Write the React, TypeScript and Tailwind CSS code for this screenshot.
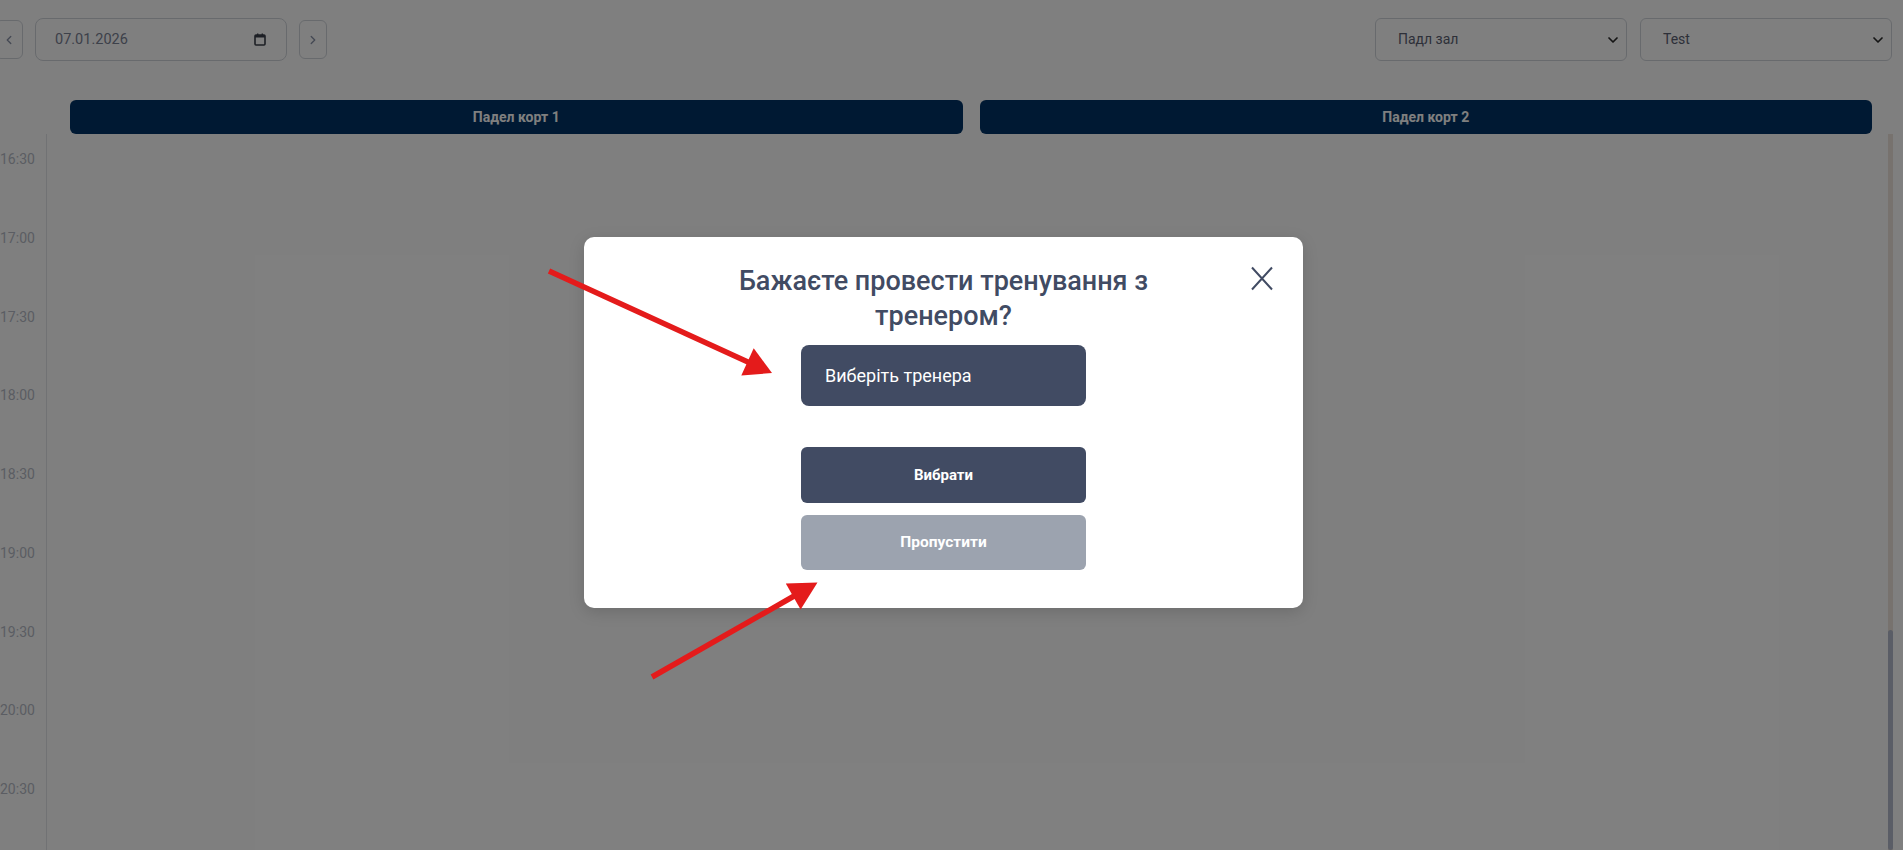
import { ChevronDown, ChevronLeft, ChevronRight } from 'lucide-react';

const times = ['16:30', '17:00', '17:30', '18:00', '18:30', '19:00', '19:30', '20:00', '20:30'];
const courts = ['Падел корт 1', 'Падел корт 2'];

function CalendarIcon() {
  return (
    <svg width="12" height="13" viewBox="0 0 12 13" fill="none">
      <rect x="1" y="2" width="10" height="10" rx="1" stroke="#3a3f4a" strokeWidth="1.6" />
      <rect x="1" y="2" width="10" height="2.5" fill="#3a3f4a" />
      <rect x="3" y="0.5" width="1.4" height="2.5" fill="#3a3f4a" />
      <rect x="7.6" y="0.5" width="1.4" height="2.5" fill="#3a3f4a" />
    </svg>
  );
}

function Select({ label }: { label: string }) {
  return (
    <div className="flex h-[43px] w-[252px] items-center justify-between rounded-md border border-[#d1d5db] bg-white pl-[22px] pr-[5px] text-[14px] text-[#5b6172]">
      <span>{label}</span>
      <ChevronDown size={16} strokeWidth={2.6} className="text-[#2b2b2b]" />
    </div>
  );
}

function Arrows() {
  return (
    <svg className="pointer-events-none absolute inset-0" width="1903" height="850">
      <line x1="549" y1="271" x2="749" y2="362.5" stroke="#e41b1b" strokeWidth="5.5" />
      <polygon points="772,373 741.3,375.4 753.7,348.2" fill="#e41b1b" />
      <line x1="652" y1="677" x2="795" y2="595.5" stroke="#e41b1b" strokeWidth="5.5" />
      <polygon points="817.5,582.5 800.6,609.4 785.8,583.4" fill="#e41b1b" />
    </svg>
  );
}

export default function App() {
  return (
    <div className="relative h-[850px] w-full overflow-hidden bg-white font-['Roboto',sans-serif]">
      {/* toolbar */}
      <div className="flex items-center justify-between pt-[18px] pr-[11px]">
        <div className="flex items-center">
          <button className="-ml-[5px] flex h-[39px] w-[28px] items-center justify-center rounded-md border border-[#d1d5db] text-[#8a93a8]">
            <ChevronLeft size={14} strokeWidth={2.4} />
          </button>
          <div className="ml-[12px] flex h-[43px] w-[252px] items-center justify-between rounded-lg border border-[#d1d5db] pl-[19px] pr-[20px] text-[14.5px] text-[#7a8294]">
            <span>07.01.2026</span>
            <CalendarIcon />
          </div>
          <button className="ml-[12px] flex h-[39px] w-[28px] items-center justify-center rounded-md border border-[#d1d5db] text-[#8a93a8]">
            <ChevronRight size={14} strokeWidth={2.4} />
          </button>
        </div>
        <div className="flex items-center gap-[13px]">
          <Select label="Падл зал" />
          <Select label="Test" />
        </div>
      </div>

      {/* court headers */}
      <div className="mt-[39px] flex gap-[17px] pl-[70px] pr-[31px]">
        {courts.map((c) => (
          <div key={c} className="flex h-[34px] flex-1 items-center justify-center rounded-md bg-[#003366] text-[14px] font-bold text-white">
            {c}
          </div>
        ))}
      </div>

      {/* time grid */}
      <div className="flex h-[716px]">
        <div className="w-[28px] pt-[15px]">
          {times.map((t) => (
            <div key={t} className="h-[78.75px] text-right text-[14px] leading-[20px] whitespace-nowrap text-[#b6bbc6]">
              {t}
            </div>
          ))}
        </div>
        <div className="ml-[18px] w-px bg-[#e3e5e9]" />
        <div className="flex-1" />
        <div className="mr-[10px] flex w-[5px] flex-col bg-[#eee4dc]">
          <div className="flex-1" />
          <div className="h-[220px] rounded-sm bg-[#b4bacc]" />
        </div>
      </div>

      {/* overlay */}
      <div className="absolute inset-0 bg-black/50" />

      {/* modal */}
      <div className="absolute left-[584px] top-[237px] flex h-[371px] w-[719px] flex-col items-center rounded-[10px] bg-white pt-[27px] shadow-[0_4px_16px_rgba(0,0,0,0.15)]">
        <button className="absolute left-[667px] top-[29px] text-[#414b63]">
          <svg width="22" height="25" viewBox="0 0 22 25">
            <path d="M1 1.5 L21 23.5 M21 1.5 L1 23.5" stroke="currentColor" strokeWidth="2" fill="none" />
          </svg>
        </button>
        <h2 className="w-[450px] text-center text-[27px] leading-[35px] font-medium text-[#414b63]">
          Бажаєте провести тренування з тренером?
        </h2>
        <button className="mt-[11px] flex h-[61px] w-[285px] items-center rounded-lg bg-[#414b63] pl-[24px] text-[18px] font-normal text-white">
          Виберіть тренера
        </button>
        <button className="mt-[41px] h-[56px] w-[285px] rounded-md bg-[#414b63] text-[15px] font-bold text-white">
          Вибрати
        </button>
        <button className="mt-[12px] h-[55px] w-[285px] rounded-md bg-[#9ca3af] text-[15.5px] font-bold text-white">
          Пропустити
        </button>
      </div>

      <Arrows />
    </div>
  );
}
